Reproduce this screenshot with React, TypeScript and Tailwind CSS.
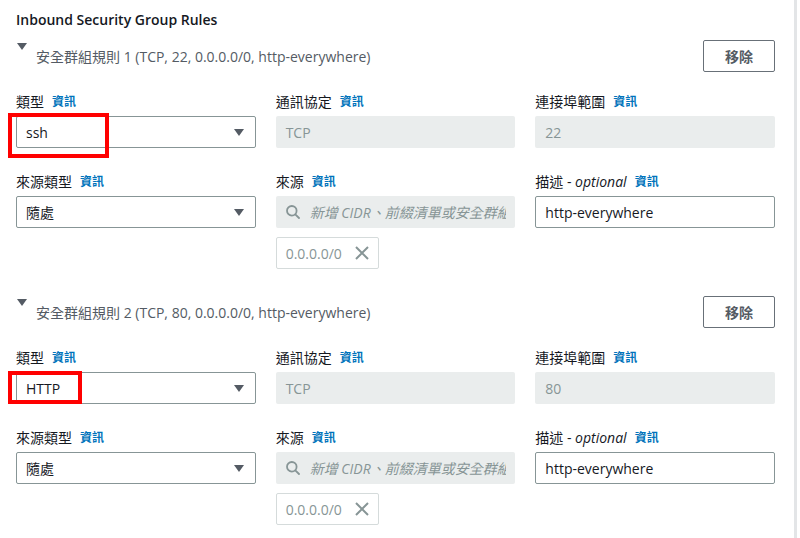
import React from "react";

const FONT = { fontFamily: '"Open Sans", "Noto Sans CJK TC", sans-serif' };

function Info() {
  return <span className="ml-2 text-[12px] font-bold text-[#0073bb]">資訊</span>;
}

function Label({ children }: { children: React.ReactNode }) {
  return (
    <div className="flex h-5 items-center text-[14px] leading-5 text-[#16191f]">
      {children}
      <Info />
    </div>
  );
}

function Caret() {
  return (
    <svg width="10" height="7" viewBox="0 0 10 7" className="shrink-0">
      <path d="M0 0 H10 L5 7 Z" fill="#545b64" />
    </svg>
  );
}

function Select({ value, red }: { value: string; red?: "a" | "b" }) {
  return (
    <div className="relative mt-1 flex h-8 items-center justify-between rounded-[2px] border border-[#879596] bg-white pl-[9px] pr-[11px] text-[14px] text-[#16191f]">
      <span>{value}</span>
      <Caret />
      {red === "a" && (
        <div className="pointer-events-none absolute left-[-9px] top-[-4px] h-[45px] w-[101px] border-4 border-[#ff0000]" />
      )}
      {red === "b" && (
        <div className="pointer-events-none absolute left-[-9px] top-[-2px] h-[33px] w-[74px] border-4 border-[#ff0000]" />
      )}
    </div>
  );
}

function Disabled({ value }: { value: string }) {
  return (
    <div className="mt-1 flex h-8 items-center rounded-[2px] bg-[#eaeded] px-[10px] text-[14px] text-[#879596]">
      {value}
    </div>
  );
}

function TextInput({ value }: { value: string }) {
  return (
    <div className="mt-1 flex h-8 items-center rounded-[2px] border border-[#879596] bg-white px-[9px] text-[14px] text-[#16191f]">
      {value}
    </div>
  );
}

function SearchInput() {
  return (
    <div className="mt-1 flex h-8 items-center overflow-hidden rounded-[2px] bg-[#eaeded] pl-[10px] pr-[9px] text-[14px] text-[#879596]">
      <svg width="14" height="14" viewBox="0 0 14 14" className="shrink-0">
        <circle cx="5.8" cy="5.8" r="4.8" fill="none" stroke="#879596" strokeWidth="1.8" />
        <path d="M9.3 9.3 L13 13" stroke="#879596" strokeWidth="1.8" strokeLinecap="round" />
      </svg>
      <div className="ml-[10px] overflow-hidden whitespace-nowrap italic">新增 CIDR、前綴清單或安全群組</div>
    </div>
  );
}

function Chip() {
  return (
    <div className="mt-[9px] flex h-8 w-[103px] items-center justify-between rounded-[2px] border border-[#d5dbdb] bg-white pl-[9px] pr-[9px] text-[14px] text-[#879596]">
      <span>0.0.0.0/0</span>
      <svg width="14" height="14" viewBox="0 0 14 14">
        <path d="M1 1 L13 13 M13 1 L1 13" stroke="#879596" strokeWidth="2" />
      </svg>
    </div>
  );
}

function Rule({ n, port, value, red }: { n: number; port: string; value: string; red: "a" | "b" }) {
  return (
    <div>
      <div className="flex h-8 items-center justify-between">
        <div className="flex h-8 items-start">
          <svg width="10" height="7" viewBox="0 0 10 7" className="ml-[1px] mt-[3px] shrink-0">
            <path d="M0 0 H10 L5 7 Z" fill="#545b64" />
          </svg>
          <span className="ml-[9px] self-center text-[14px] text-[#545b64]">
            安全群組規則 {n} (TCP, {port}, 0.0.0.0/0, http-everywhere)
          </span>
        </div>
        <button className="h-8 w-[72px] rounded-[2px] border border-[#687078] bg-white text-[14px] font-bold text-[#545b64]">
          移除
        </button>
      </div>

      <div className="mt-5 grid grid-cols-3 gap-x-5">
        <div>
          <Label>類型</Label>
          <Select value={value} red={red} />
        </div>
        <div>
          <Label>通訊協定</Label>
          <Disabled value="TCP" />
        </div>
        <div>
          <Label>連接埠範圍</Label>
          <Disabled value={port} />
        </div>
      </div>

      <div className="mt-6 grid grid-cols-3 gap-x-5">
        <div>
          <Label>來源類型</Label>
          <Select value="隨處" />
        </div>
        <div>
          <Label>來源</Label>
          <SearchInput />
          <Chip />
        </div>
        <div>
          <div className="flex h-5 items-center text-[14px] leading-5 text-[#16191f]">
            描述 -&nbsp;<span className="italic">optional</span>
            <Info />
          </div>
          <TextInput value="http-everywhere" />
        </div>
      </div>
    </div>
  );
}

export default function App() {
  return (
    <div className="flex h-[538px] w-[800px] overflow-hidden bg-white" style={FONT}>
      <div className="w-[794px] shrink-0 pl-4 pr-[19px]">
        <div className="pt-[10px] text-[14px] font-semibold leading-5 text-[#16191f]">
          Inbound Security Group Rules
        </div>
        <div className="mt-[10px]">
          <Rule n={1} port="22" value="ssh" red="a" />
        </div>
        <div className="mt-[27px]">
          <Rule n={2} port="80" value="HTTP" red="b" />
        </div>
      </div>
      <div className="w-[3px] shrink-0 bg-[#e3e5e7]" />
      <div className="flex-1 bg-white" />
    </div>
  );
}
